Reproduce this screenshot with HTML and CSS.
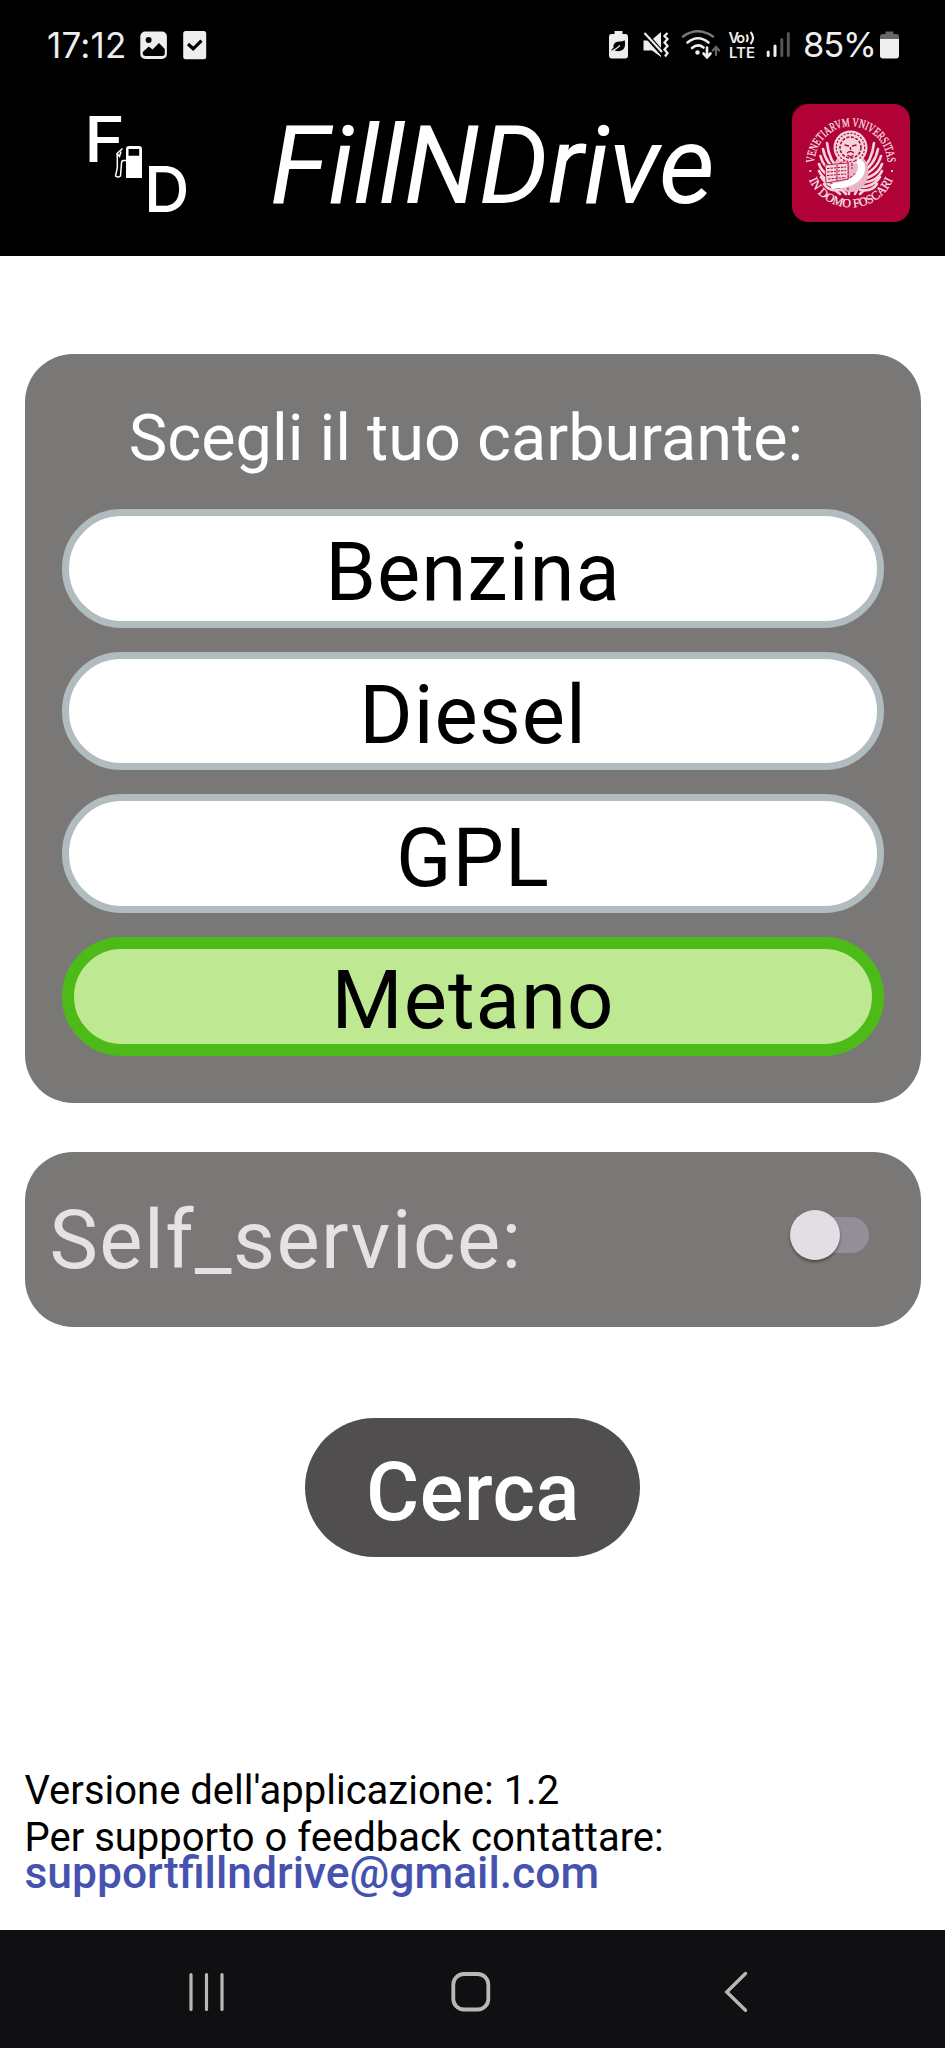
FILE: index.html
```html
<!DOCTYPE html>
<html lang="it">
<head>
<meta charset="utf-8">
<title>FillNDrive</title>
<link rel="stylesheet" href="styles.css">
</head>
<body>
<div class="screen">
  <div class="status">
    <div class="status-group">
      <span class="clock">17:12</span>
      <svg class="ic-photo" width="28" height="30" viewBox="140 30 28 30">
        <rect x="140.3" y="31.5" width="26.6" height="27.5" rx="5" fill="#eee"/>
        <circle cx="148.6" cy="40" r="3" fill="#000"/>
        <path d="M142.8 52 L148.8 46.4 L152.6 49.4 L159 43 L164.8 49 V53.5 Q164.8 56 162 56 H146 Q142.8 56 142.8 53.5Z" fill="#000"/>
      </svg>
      <svg width="24" height="30" viewBox="183 30 24 30">
        <rect x="183.2" y="31" width="23" height="28.3" rx="2.5" fill="#eee"/>
        <path d="M188 44 L193.2 48.8 L201.5 40.6" fill="none" stroke="#000" stroke-width="3.2"/>
      </svg>
    </div>
    <div class="status-group right">
      <svg width="21" height="30" viewBox="608 30 21 30">
        <path d="M614.5 31 H622.5 V34 H625.5 Q628 34 628 37 V55.500 Q628 58.500 625 58.500 H612 Q609 58.500 609 55.500 V37 Q609 34 611.5 34 H614.5Z" fill="#eee"/>
        <path d="M624.8 40.200 Q626.500 51 619 51.200 Q615.500 51.200 614.5 50 Q611 51.800 611.5 50 Q611.8 48.500 613.5 48 Q612.5 42 619.500 41.600 Q623 41.400 624.800 40.200Z" fill="#000"/>
        <path d="M612 50.800 Q616 49.500 620 45.500" fill="none" stroke="#eee" stroke-width="1.200"/>
      </svg>
      <svg class="ic-mute" width="28" height="30" viewBox="642 30 28 30">
        <path d="M643.5 40.500 H651 L661 32 V57 L652 50.500 H643.500Z" fill="#eee"/>
        <path d="M643 31.500 L663 54" stroke="#000" stroke-width="5"/>
        <path d="M644.5 33 L662 52" stroke="#eee" stroke-width="2.200"/>
        <path d="M667.500 33 L664.500 36 L667.500 39 L664.500 42.500 L667.500 46 L664.500 49.500 L667.500 53 L665 56.500" fill="none" stroke="#eee" stroke-width="2.300"/>
      </svg>
      <svg class="ic-wifi" width="40" height="32" viewBox="681 29 40 32">
        <g fill="none" stroke="#eee" stroke-width="2.600" stroke-linecap="round">
          <path d="M683 36.500 Q697.500 26 713 36.500" stroke="#777"/>
          <path d="M687.500 42.500 Q698 34 708.500 42.500"/>
          <path d="M692 48 Q698 43 703.500 47.500"/>
          <path d="M707 47.500 V57 M703.500 53.500 L707 57.300 L710.500 53.500"/>
          <path d="M716 55 V47.500 M712.800 50.500 L716 47 L719.200 50.500" stroke="#666" stroke-width="2.200"/>
        </g>
        <circle cx="697.500" cy="52.500" r="2.200" fill="#eee"/>
      </svg>
      <svg class="ic-volte" width="28" height="32" viewBox="728 29 28 32">
        <text x="728.500" y="43" class="volte" textLength="16.500">Vo</text>
        <path d="M746.500 34.500 Q749 38 746.500 42 M750.500 32 Q755.500 37.500 750.500 44" fill="none" stroke="#eee" stroke-width="2.100"/>
        <text x="729" y="57.800" class="volte" textLength="26" lengthAdjust="spacingAndGlyphs">LTE</text>
      </svg>
      <svg class="ic-signal" width="24" height="30" viewBox="766 30 24 30">
        <g stroke-width="3" stroke-linecap="round">
          <path d="M768.200 52 V55.500 M775 46 V55.500" stroke="#eee"/>
          <path d="M781.800 39.500 V55.500 M788.300 33.500 V55.500" stroke="#555"/>
        </g>
      </svg>
      <span class="battery-text">85%</span>
      <svg width="20" height="30" viewBox="880 30 20 30">
        <path d="M885.500 31.500 H893.500 V34 H896.500 Q899 34 899 37 V40 H880 V37 Q880 34 882.500 34 H885.500Z" fill="#666"/>
        <path d="M880 39 H899 V55.500 Q899 58.500 896 58.500 H883 Q880 58.500 880 55.500Z" fill="#eee"/>
      </svg>
    </div>
  </div>

  <header class="appbar">
    <svg class="logo" width="110" height="110" viewBox="80 108 110 110">
      <text class="logo-letter" x="84" y="162" textLength="41" lengthAdjust="spacingAndGlyphs">F</text>
      <text class="logo-letter" x="144" y="211.500">D</text>
      <path fill-rule="evenodd" d="M129 146 H139 Q142 146 142 149 V178 H126 V149 Q126 146 129 146Z M128.500 149 V155.800 H139.200 V149Z" fill="#fff"/>
      <path d="M126 160.500 H123.500 Q121.500 160.500 121.500 163 L120.500 176 Q118 178 115.500 176 L117.300 168 V158 L117 153.500 L122.500 148.500 M117 153.500 L119.500 156.500 L121 151.500" fill="none" stroke="#fff" stroke-width="1.500"/>
    </svg>
    <h1 class="title">FillNDrive</h1>
    <svg class="seal" width="118" height="118" viewBox="792 104 118 118">
      <defs>
        <path id="arc-top" d="M814.500 163 A36.500 36.500 0 0 1 887.500 163"/>
        <path id="arc-bottom" d="M808.800 179 A45.500 45.500 0 0 0 893.200 179"/>
      </defs>
      <rect x="792" y="104" width="118" height="118" rx="16" fill="#b00237"/>
      <g class="seal-text">
        <text><textPath href="#arc-top" textLength="114" lengthAdjust="spacingAndGlyphs">VENETIARVM VNIVERSITAS</textPath></text>
        <text><textPath href="#arc-bottom" startOffset="1" textLength="106" lengthAdjust="spacingAndGlyphs">IN DOMO FOSCARI</textPath></text>
      </g>
      <g fill="#f8dfe6">
        <circle cx="810.300" cy="171" r="1.100"/><circle cx="892" cy="171" r="1.100"/>
      </g>
      <g fill="none" stroke="#f3d3dc" stroke-width="2.600" stroke-linecap="round">
        <path d="M841 171 Q829 162 827 143 M841 174 Q826 165 823 149 M841 177 Q824 170 820.500 156 M841 180 Q823 176 819 164 M841 183 Q824 182 819 171 M841 187 Q827 187 821 177 M841 190 Q829 192 824 184"/>
        <path d="M860 171 Q872 162 874 143 M860 174 Q875 165 878 149 M860 177 Q877 170 881 156 M860 180 Q878 176 882 164 M860 183 Q877 182 882 171 M860 187 Q874 187 880 177 M860 190 Q872 192 877 184"/>
        <path d="M836 191 L840 194 M842 190 L846 194 M849 190 V194 M857 190 L855 194 M864 190 L860 194"/>
      </g>
      <ellipse cx="850.500" cy="172" rx="18" ry="20" fill="#e9b5c4"/>
      <circle cx="850.500" cy="147.500" r="17" fill="#f3d3dc"/>
      <circle cx="850.500" cy="147.500" r="14.200" fill="none" stroke="#b00237" stroke-width="1.200" stroke-dasharray="2 1.500"/>
      <circle cx="850.500" cy="147.500" r="10.500" fill="none" stroke="#b00237" stroke-width="1.500" stroke-dasharray="3 1.500"/>
      <path d="M844.500 145 L849 146 M852 146 L856.500 145 M850.500 147 V150 M847 153 Q850.500 150 854 153 M847.500 155 L850.500 157 L853.500 155" fill="none" stroke="#b00237" stroke-width="1.300"/>
      <path d="M839 164 L846 160 M855 160 L862 164 M848 162 V190 M843 163 V168 M852 163 V169 M836 188 L862 169" fill="none" stroke="#b00237" stroke-width="1.100" stroke-dasharray="3 1.300"/>
      <path d="M825 165 L848 163 V179 L826 183Z" fill="#f3d3dc" stroke="#b00237" stroke-width=".8"/>
      <path d="M827 168.500 L846 167 M827 172 L846 170.500 M827 175.500 L846 174 M828 179 L846 177.500 M837 165 V181" stroke="#b00237" stroke-width="1" stroke-dasharray="2.500 1"/>
      <path d="M858 158 Q868 162 864 174 Q858 188 832 189 Q829 186 833 183 Q850 182 856 173 Q860 167 856 162Z" fill="#fff"/>
    </svg>
  </header>

  <main class="content">
    <section class="card fuels">
      <h2 class="fuels-title">Scegli il tuo carburante:</h2>
      <div class="fuel-list">
        <button class="fuel">Benzina</button>
        <button class="fuel">Diesel</button>
        <button class="fuel">GPL</button>
        <button class="fuel selected">Metano</button>
      </div>
    </section>

    <section class="card self">
      <span class="self-label">Self_service:</span>
      <span class="switch"><span class="thumb"></span></span>
    </section>

    <button class="search">Cerca</button>

    <footer class="info">
      <p class="line version">Versione dell'applicazione: 1.2</p>
      <p class="line support">Per supporto o feedback contattare:</p>
      <a class="mail">supportfillndrive@gmail.com</a>
    </footer>
  </main>

  <nav class="navbar">
    <svg width="36" height="44" viewBox="188 1970 36 44">
      <path d="M191 1974.500 V2009.500 M206.500 1974.500 V2009.500 M222 1974.500 V2009.500" stroke="#b8b8b8" stroke-width="3.200" stroke-linecap="round"/>
    </svg>
    <svg class="nav-home" width="44" height="44" viewBox="449 1970 44 44">
      <rect x="453.300" y="1974" width="35" height="35.500" rx="10.500" fill="none" stroke="#b8b8b8" stroke-width="3.800"/>
    </svg>
    <svg class="nav-back" width="28" height="44" viewBox="722 1970 28 44">
      <path d="M745.500 1973.500 L726.800 1992 L745.500 2010.300" fill="none" stroke="#b8b8b8" stroke-width="3.400" stroke-linecap="round"/>
    </svg>
  </nav>
</div>
</body>
</html>
```

FILE: styles.css
```css
* {
  box-sizing: border-box;
}

body {
  margin: 0;
  background: #fff;
  font-family: Roboto, "Liberation Sans", sans-serif;
}

h1, h2, p {
  margin: 0;
  font-weight: 400;
}

svg {
  display: block;
  flex: none;
  overflow: visible;
}

button {
  font: inherit;
  white-space: nowrap;
}

.screen {
  display: flex;
  flex-direction: column;
  width: 945px;
  height: 2048px;
  overflow: hidden;
}

/* Status bar */
.status {
  display: flex;
  justify-content: space-between;
  align-items: center;
  height: 90px;
  padding: 0 45px 0 47px;
  background: #000;
  color: #eee;
  font-family: Inter, Roboto, sans-serif;
}

.status-group {
  display: flex;
  align-items: center;
}

.clock {
  width: 93px;
  font-size: 35px;
  line-height: 40px;
  letter-spacing: 0.2px;
}

.ic-photo {
  margin-right: 15px;
}

.ic-mute {
  margin-left: 13px;
}

.ic-wifi {
  margin-left: 11px;
}

.ic-volte {
  margin-left: 7px;
}

.volte {
  font: 600 14.500px Inter, sans-serif;
  fill: #eee;
}

.ic-signal {
  margin-left: 10px;
}

.battery-text {
  width: 77px;
  margin-left: 13px;
  font-size: 34.5px;
  line-height: 40px;
  letter-spacing: -1.1px;
}

/* App bar */
.appbar {
  display: flex;
  height: 166px;
  padding-left: 80px;
  background: #000;
}

.logo {
  margin-top: 18px;
}

.logo-letter {
  font: 500 63px Inter, sans-serif;
  fill: #fff;
}

.title {
  width: 522px;
  margin: 12px 0 0 80px;
  color: #fff;
  font-size: 109px;
  font-style: italic;
  line-height: 128px;
  letter-spacing: -0.4px;
  white-space: nowrap;
}

.seal {
  margin-top: 14px;
}

.seal-text {
  font: 12.3px "Liberation Serif", serif;
  fill: #fbeaf0;
  stroke: #fbeaf0;
  stroke-width: .2px;
}

/* Content */
.content {
  display: flex;
  flex-direction: column;
  align-items: center;
  height: 1674px;
  padding: 98px 24.5px 0;
}

.card {
  width: 896px;
  border-radius: 48px;
  background: #7a7876;
}

.fuels {
  height: 748.5px;
  padding: 0 37px;
}

.fuels-title {
  height: 155px;
  padding: 13px 13px 0 0;
  color: #fff;
  font-size: 64.8px;
  line-height: 142px;
  text-align: center;
  white-space: nowrap;
}

.fuel-list {
  display: flex;
  flex-direction: column;
  gap: 24px;
}

.fuel {
  height: 118.700px;
  padding: 8px 0 0 1px;
  border: 7px solid #b0bcbe;
  border-radius: 60px;
  background: #fff;
  color: #000;
  font-size: 81.5px;
  line-height: 90px;
  letter-spacing: 1px;
}

.fuel.selected {
  padding-top: 6px;
  border: 12px solid #4cbb17;
  background: #bfe893;
}

.self {
  display: flex;
  justify-content: space-between;
  align-items: center;
  height: 175px;
  margin-top: 49px;
  padding: 0 52px 0 25px;
}

.self-label {
  padding-top: 2px;
  color: #e6e1e5;
  font-size: 81.5px;
  letter-spacing: 1.4px;
}

.switch {
  display: flex;
  align-items: center;
  width: 79px;
  height: 36px;
  margin-bottom: 8px;
  border-radius: 18px;
  background: #938f99;
}

.thumb {
  flex: none;
  width: 50px;
  height: 50px;
  border-radius: 50%;
  background: #e3dee3;
  box-shadow: 0 2px 3px rgba(0, 0, 0, .4);
}

.search {
  width: 334.500px;
  height: 139px;
  margin-top: 91.500px;
  padding: 9px 0 0 1px;
  border: 0;
  border-radius: 70px;
  background: #504e4f;
  color: #fff;
  font-size: 81.5px;
  font-weight: 500;
  letter-spacing: 0.5px;
}

.info {
  align-self: stretch;
  display: flex;
  flex-direction: column;
  margin-top: 210px;
  color: #000;
  font-size: 40px;
  white-space: nowrap;
}

.line {
  height: 47px;
  line-height: 47px;
}

.mail {
  color: #4553ae;
  font-size: 44.4px;
  font-weight: 500;
  line-height: 24px;
}

/* Navigation bar */
.navbar {
  display: flex;
  align-items: center;
  height: 118px;
  padding: 6px 0 0 188px;
  background: #101012;
}

.nav-home {
  margin-left: 225px;
}

.nav-back {
  margin-left: 229px;
}
```
